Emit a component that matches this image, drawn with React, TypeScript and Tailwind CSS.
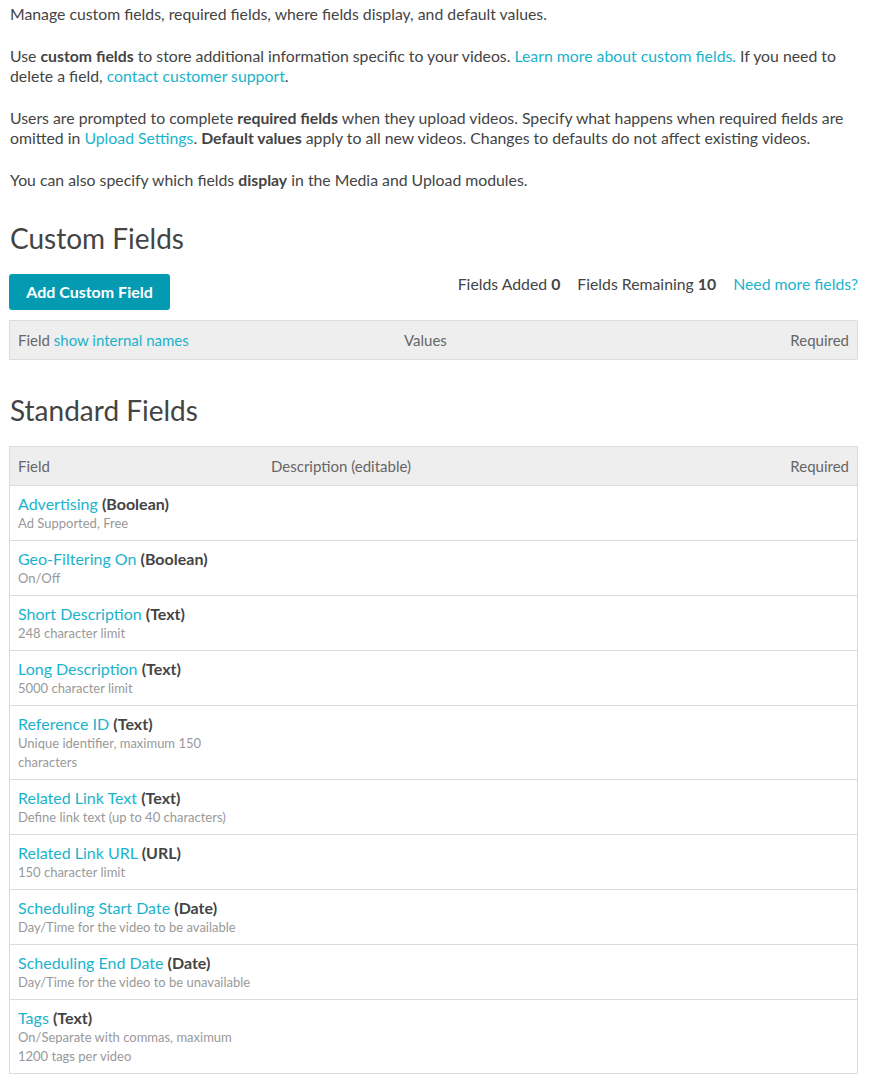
const standardFields = [
  { name: "Advertising", type: "Boolean", desc: ["Ad Supported, Free"] },
  { name: "Geo-Filtering On", type: "Boolean", desc: ["On/Off"] },
  { name: "Short Description", type: "Text", desc: ["248 character limit"] },
  { name: "Long Description", type: "Text", desc: ["5000 character limit"] },
  { name: "Reference ID", type: "Text", desc: ["Unique identifier, maximum 150", "characters"] },
  { name: "Related Link Text", type: "Text", desc: ["Define link text (up to 40 characters)"] },
  { name: "Related Link URL", type: "URL", desc: ["150 character limit"] },
  { name: "Scheduling Start Date", type: "Date", desc: ["Day/Time for the video to be available"] },
  { name: "Scheduling End Date", type: "Date", desc: ["Day/Time for the video to be unavailable"] },
  { name: "Tags", type: "Text", desc: ["On/Separate with commas, maximum", "1200 tags per video"] },
]

function Link({ children }: { children: React.ReactNode }) {
  return <a className="text-[#1ab3cc] cursor-pointer">{children}</a>
}

export default function App() {
  return (
    <div className="bg-white min-h-screen font-['Lato',sans-serif] text-[#444] text-[15.8px] leading-[20px]">
      <div className="w-[849px] ml-[9px] pt-[4px] pb-[10px]">
        {/* intro copy */}
        <div className="pl-[1px] pr-[10px] flex flex-col gap-[22px]">
          <p>Manage custom fields, required fields, where fields display, and default values.</p>
          <p>
            Use <b className="font-bold">custom fields</b> to store additional information specific to your videos.{" "}
            <Link>Learn more about custom fields.</Link> If you need to delete a field,{" "}
            <Link>contact customer support</Link>.
          </p>
          <p>
            Users are prompted to complete <b className="font-bold">required fields</b> when they upload videos. Specify
            what happens when required fields are omitted in <Link>Upload Settings</Link>.{" "}
            <b className="font-bold">Default values</b> apply to all new videos. Changes to defaults do not affect
            existing videos.
          </p>
          <p>
            You can also specify which fields <b className="font-bold">display</b> in the Media and Upload modules.
          </p>
        </div>

        {/* Custom Fields */}
        <h2 className="pl-[1px] mt-[30px] text-[28px] leading-[36px] font-normal">Custom Fields</h2>
        <div className="mt-[18px] flex items-start justify-between">
          <button className="h-[36px] w-[161px] rounded-[3px] bg-[#049bb2] text-white text-[16px] font-bold">
            Add Custom Field
          </button>
          <div className="flex gap-[17px]">
            <span>
              Fields Added <b className="font-bold">0</b>
            </span>
            <span>
              Fields Remaining <b className="font-bold">10</b>
            </span>
            <Link>Need more fields?</Link>
          </div>
        </div>
        <div className="mt-[10px] h-[40px] border border-[#dcdcdc] bg-[#eeeeee] flex items-center px-[8px] text-[#666] text-[15px]">
          <div className="w-[386px]">
            Field <Link>show internal names</Link>
          </div>
          <div className="flex-1">Values</div>
          <div>Required</div>
        </div>

        {/* Standard Fields */}
        <h2 className="pl-[1px] mt-[32px] text-[28px] leading-[36px] font-normal">Standard Fields</h2>
        <div className="mt-[18px] border border-[#dcdcdc]">
          <div className="h-[39px] bg-[#eeeeee] flex items-center px-[8px] text-[#666] text-[15px] border-b border-[#dcdcdc]">
            <div className="w-[253px]">Field</div>
            <div className="flex-1">Description (editable)</div>
            <div>Required</div>
          </div>
          {standardFields.map((f, i) => (
            <div
              key={f.name}
              className={`flex px-[8px] pt-[8px] pb-[7px] ${i < standardFields.length - 1 ? "border-b border-[#dcdcdc]" : ""}`}
            >
              <div className="w-[253px]">
                <div className="text-[16px]">
                  <Link>{f.name}</Link> <span className="font-bold">({f.type})</span>
                </div>
                {f.desc.map((d) => (
                  <div key={d} className="text-[13px] leading-[19px] text-[#999]">
                    {d}
                  </div>
                ))}
              </div>
              <div className="flex-1" />
            </div>
          ))}
        </div>
      </div>
    </div>
  )
}
